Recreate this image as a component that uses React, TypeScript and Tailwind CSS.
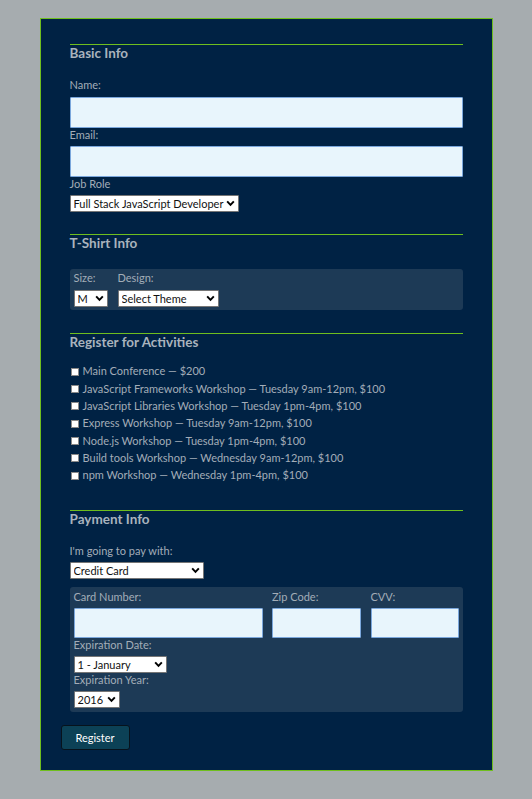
import type { ReactNode } from "react";

const ACTIVITIES = [
  "Main Conference — $200",
  "JavaScript Frameworks Workshop — Tuesday 9am-12pm, $100",
  "JavaScript Libraries Workshop — Tuesday 1pm-4pm, $100",
  "Express Workshop — Tuesday 9am-12pm, $100",
  "Node.js Workshop — Tuesday 1pm-4pm, $100",
  "Build tools Workshop — Wednesday 9am-12pm, $100",
  "npm Workshop — Wednesday 1pm-4pm, $100",
];

function Section({ title, className, children }: { title: string; className?: string; children: ReactNode }) {
  return (
    <section className={`mx-[9px] border-t border-[#6fbe1e] ${className ?? ""}`}>
      <h2 className="text-[13.5px] leading-4 font-bold text-[#a9b3bd]">{title}</h2>
      {children}
    </section>
  );
}

function Label({ children, className }: { children: ReactNode; className?: string }) {
  return <label className={`block text-[11px] leading-[14px] text-[#a3adb8] ${className ?? ""}`}>{children}</label>;
}

function TextInput({ className }: { className?: string }) {
  return <input type="text" className={`block rounded-[1px] border border-[#7ba7dc] bg-[#e8f5fc] outline-none ${className ?? ""}`} />;
}

function Select({ value, width }: { value: string; width: string }) {
  return (
    <div className={`relative h-[17px] leading-none ${width}`}>
      <select
        defaultValue={value}
        className="block h-full w-full appearance-none rounded-[1px] border border-[#767676] bg-white pl-[3px] text-[11px] leading-[15px] text-[#111] outline-none"
      >
        <option>{value}</option>
      </select>
      <svg viewBox="0 0 10 8" className="pointer-events-none absolute top-[5px] right-[4px] h-[7px] w-[9px]">
        <path d="M1.2 1.5 L5 5.5 L8.8 1.5" fill="none" stroke="#000" strokeWidth="2.2" />
      </svg>
    </div>
  );
}

export default function App() {
  return (
    <div className="min-h-screen bg-[#a6acaf] pt-[18px] pb-[28px] font-['Lato','Noto_Sans',sans-serif]">
      <form className="mx-auto w-[453px] border border-[#6fbe1e] bg-[#002244] px-5 pt-[25px] pb-[20px]">
        <Section title="Basic Info">
          <Label className="mt-[17px] mb-[5px]">Name:</Label>
          <TextInput className="h-[31px] w-full" />
          <Label className="mb-[4px]">Email:</Label>
          <TextInput className="h-[31px] w-full" />
          <Label className="mb-[4px]">Job Role</Label>
          <Select value="Full Stack JavaScript Developer" width="w-[169px]" />
        </Section>

        <Section title="T-Shirt Info" className="mt-[22px]">
          <div className="mt-[18px] flex gap-[10px] rounded-[3px] bg-[#1d3a56] px-[4px] pt-[2px] pb-[3px]">
            <div className="w-[34px]">
              <Label className="mb-[5px]">Size:</Label>
              <Select value="M" width="w-[34px]" />
            </div>
            <div>
              <Label className="mb-[5px]">Design:</Label>
              <Select value="Select Theme" width="w-[101px]" />
            </div>
          </div>
        </Section>

        <Section title="Register for Activities" className="mt-[23px]">
          <div className="mt-[13px]">
            {ACTIVITIES.map((activity) => (
              <label key={activity} className="flex h-[17.33px] items-center gap-[4px] text-[11px] text-[#a3adb8]">
                <span className="ml-[1px] block h-[8px] w-[8px] shrink-0 border border-[#888] bg-white" />
                {activity}
              </label>
            ))}
          </div>
        </Section>

        <Section title="Payment Info" className="mt-[26px]">
          <Label className="mt-[17px] mb-[4px]">I'm going to pay with:</Label>
          <Select value="Credit Card" width="w-[134px]" />
          <div className="mt-[8px] rounded-[3px] bg-[#1d3a56] pt-[3px] pr-[3px] pb-[4px] pl-[4px]">
            <div className="grid grid-cols-[189px_89px_88px] gap-x-[9.5px]">
              <div>
                <Label className="mb-[4px]">Card Number:</Label>
                <TextInput className="h-[30px] w-full" />
              </div>
              <div>
                <Label className="mb-[4px]">Zip Code:</Label>
                <TextInput className="h-[30px] w-full" />
              </div>
              <div>
                <Label className="mb-[4px]">CVV:</Label>
                <TextInput className="h-[30px] w-full" />
              </div>
            </div>
            <Label className="mb-[4px]">Expiration Date:</Label>
            <Select value="1 - January" width="w-[93px]" />
            <Label className="mb-[4px]">Expiration Year:</Label>
            <Select value="2016" width="w-[46px]" />
          </div>
        </Section>

        <button
          type="button"
          className="mt-[13px] h-[25px] w-[69px] rounded-[3px] border border-[#07121c] bg-[#0c4156] text-[11px] text-white"
        >
          Register
        </button>
      </form>
    </div>
  );
}
